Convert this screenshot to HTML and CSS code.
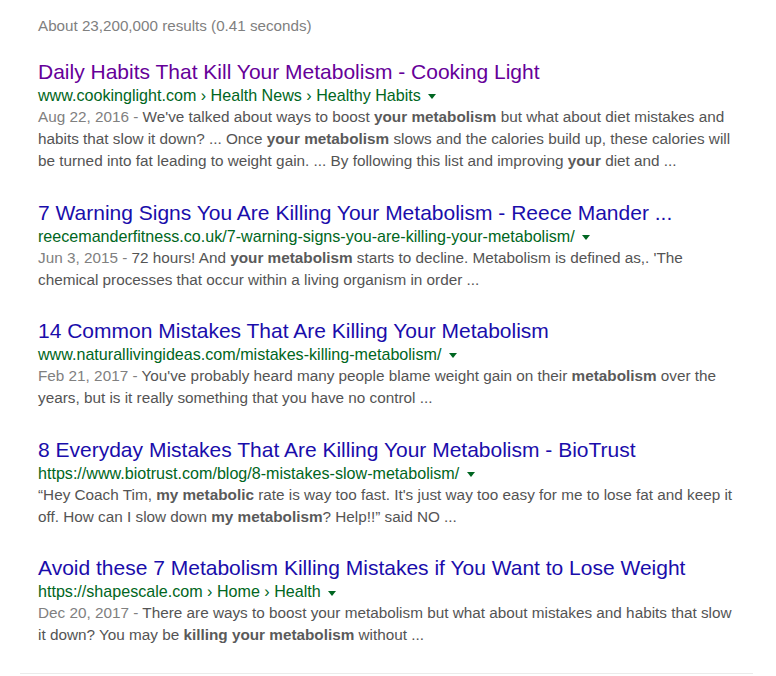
FILE: index.html
```html
<!DOCTYPE html>
<html lang="en">
<head>
    <meta charset="UTF-8">
    <title>metabolism - Search</title>
    <link rel="stylesheet" href="styles.css">
</head>
<body>
    <div class="page">
        <div class="stats">About 23,200,000 results (0.41 seconds)</div>

        <div class="result">
            <a class="title visited" href="#">Daily Habits That Kill Your Metabolism - Cooking Light</a>
            <div class="url">www.cookinglight.com › Health News › Healthy Habits <span class="arrow"></span></div>
            <div class="snippet"><span class="date">Aug 22, 2016 - </span>We've talked about ways to boost <b>your metabolism</b> but what about diet mistakes and habits that slow it down? ... Once <b>your metabolism</b> slows and the calories build up, these calories will be turned into fat leading to weight gain. ... By following this list and improving <b>your</b> diet and ...</div>
        </div>

        <div class="result">
            <a class="title" href="#">7 Warning Signs You Are Killing Your Metabolism - Reece Mander ...</a>
            <div class="url">reecemanderfitness.co.uk/7-warning-signs-you-are-killing-your-metabolism/ <span class="arrow"></span></div>
            <div class="snippet"><span class="date">Jun 3, 2015 - </span>72 hours! And <b>your metabolism</b> starts to decline. Metabolism is defined as,. 'The chemical processes that occur within a living organism in order ...</div>
        </div>

        <div class="result">
            <a class="title" href="#">14 Common Mistakes That Are Killing Your Metabolism</a>
            <div class="url">www.naturallivingideas.com/mistakes-killing-metabolism/ <span class="arrow"></span></div>
            <div class="snippet"><span class="date">Feb 21, 2017 - </span>You've probably heard many people blame weight gain on their <b>metabolism</b> over the years, but is it really something that you have no control ...</div>
        </div>

        <div class="result">
            <a class="title" href="#">8 Everyday Mistakes That Are Killing Your Metabolism - BioTrust</a>
            <div class="url">https://www.biotrust.com/blog/8-mistakes-slow-metabolism/ <span class="arrow"></span></div>
            <div class="snippet">“Hey Coach Tim, <b>my metabolic</b> rate is way too fast. It's just way too easy for me to lose fat and keep it off. How can I slow down <b>my metabolism</b>? Help!!” said NO ...</div>
        </div>

        <div class="result">
            <a class="title" href="#">Avoid these 7 Metabolism Killing Mistakes if You Want to Lose Weight</a>
            <div class="url">https://shapescale.com › Home › Health <span class="arrow"></span></div>
            <div class="snippet"><span class="date">Dec 20, 2017 - </span>There are ways to boost your metabolism but what about mistakes and habits that slow it down? You may be <b>killing your metabolism</b> without ...</div>
        </div>
    </div>
    <div class="footer-line"></div>
</body>
</html>
```

FILE: styles.css
```css
body {
    margin: 0;
    font-family: "Liberation Sans", Arial, sans-serif;
    background: #fff;
}
.page {
    padding: 16px 0 0 38px;
    width: 700px;
}
.stats {
    color: #808080;
    font-size: 15.2px;
    line-height: 20px;
    margin-bottom: 24px;
}
.result {
    margin-bottom: 28.6px;
}
.title {
    display: block;
    color: #1a0dab;
    font-size: 21px;
    line-height: 24px;
    text-decoration: none;
    white-space: nowrap;
}
.title.visited {
    color: #660099;
}
.url {
    color: #006621;
    font-size: 16.1px;
    line-height: 22px;
    white-space: nowrap;
}
.arrow {
    display: inline-block;
    margin-left: 3px;
    vertical-align: middle;
    border-top: 5px solid #006621;
    border-left: 4.5px solid transparent;
    border-right: 4.5px solid transparent;
}
.snippet {
    color: #545454;
    font-size: 15.3px;
    line-height: 22px;
}
.snippet b {
    color: #5a5a5a;
}
.date {
    color: #808080;
}
.footer-line {
    position: absolute;
    left: 20px;
    top: 673px;
    width: 733px;
    height: 1px;
    background: #ebebeb;
}
```
